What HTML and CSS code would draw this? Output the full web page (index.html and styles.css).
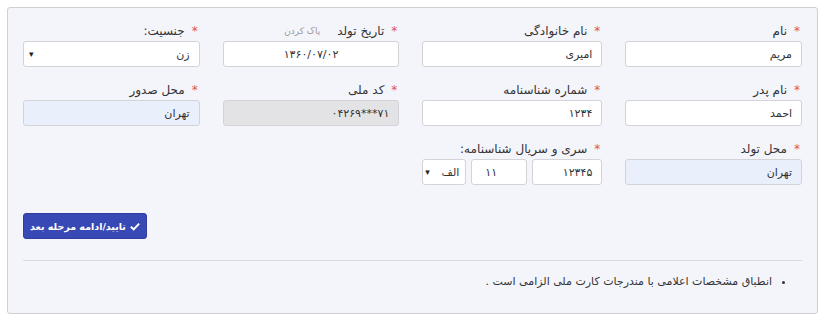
FILE: index.html
```html
<!DOCTYPE html>
<html lang="fa" dir="rtl">
<head>
<meta charset="utf-8">
<title>مشخصات فردی</title>
<link rel="stylesheet" href="styles.css">
</head>
<body>
<div class="panel">
<div class="fields">
  <div class="field">
    <label class="lbl"><span class="req">*</span> نام</label>
    <div class="input">مریم</div>
  </div>
  <div class="field">
    <label class="lbl"><span class="req">*</span> نام خانوادگی</label>
    <div class="input">امیری</div>
  </div>
  <div class="field">
    <label class="lbl"><span class="req">*</span> تاریخ تولد <a class="clear" href="#">پاک کردن</a></label>
    <div class="input center">۱۳۶۰/۰۷/۰۲</div>
  </div>
  <div class="field">
    <label class="lbl"><span class="req">*</span> جنسیت:</label>
    <div class="input select">زن <span class="arrow">&#9662;</span></div>
  </div>

  <div class="field">
    <label class="lbl"><span class="req">*</span> نام پدر</label>
    <div class="input">احمد</div>
  </div>
  <div class="field">
    <label class="lbl"><span class="req">*</span> شماره شناسنامه</label>
    <div class="input">۱۲۳۴</div>
  </div>
  <div class="field">
    <label class="lbl"><span class="req">*</span> کد ملی</label>
    <div class="input grey"><bdi dir="ltr">۰۴۲۶۹***۷۱</bdi></div>
  </div>
  <div class="field">
    <label class="lbl"><span class="req">*</span> محل صدور</label>
    <div class="input blue">تهران</div>
  </div>

  <div class="field">
    <label class="lbl"><span class="req">*</span> محل تولد</label>
    <div class="input blue">تهران</div>
  </div>
  <div class="field">
    <label class="lbl"><span class="req">*</span> سری و سریال شناسنامه:</label>
    <div class="serial">
      <div class="input s-num">۱۲۳۴۵</div>
      <div class="input s-sub">۱۱</div>
      <div class="input select s-let">الف <span class="arrow">&#9662;</span></div>
    </div>
  </div>
</div>

<div class="actions">
  <button class="btn" type="button"><svg class="check" viewBox="0 0 12 10" width="10" height="9"><path d="M1 5.2 L4.4 8.4 L11 1.6" fill="none" stroke="#fff" stroke-width="2.4"/></svg> تایید/ادامه مرحله بعد</button>
</div>

<hr class="sep">

<ul class="notes">
  <li>انطباق مشخصات اعلامی با مندرجات کارت ملی الزامی است .</li>
</ul>
</div>
</body>
</html>
```

FILE: styles.css
```css
/* Personal info form */

html, body
{ margin: 0;
background: #fff;
}

body
{ padding: 7px 7px 0;
font-family: "DejaVu Sans", "Noto Sans", sans-serif;
font-size: 12px;
color: #333;
}

div.panel
{ background-color: #f4f4fb;
border: 1px solid #cfcfd6;
border-radius: 3px;
padding: 15px 15px 0 15px;
height: 307px;
box-sizing: border-box;
}

div.fields
{ display: grid;
grid-template-columns: repeat(4, 1fr);
column-gap: 23px;
row-gap: 15px;
}

label.lbl
{ display: flex;
align-items: center;
gap: 7px;
height: 15px;
margin-bottom: 3px;
padding-right: 2px;
font-size: 12px;
color: #333;
}

span.req
{ color: #e05555;
font-size: 12px;
}

a.clear
{ margin-right: 10px;
font-size: 9px;
color: #999;
text-decoration: none;
}

div.input
{ height: 26px;
box-sizing: border-box;
display: flex;
align-items: center;
padding: 0 9px;
background: #fff;
border: 1px solid #d3d3d8;
border-radius: 3px;
font-size: 11px;
color: #333;
}

div.input.center
{ justify-content: center;
}

div.input.grey
{ background: #e3e3e5;
}

div.input.blue
{ background: #eaf0fb;
}

div.input.select
{ justify-content: space-between;
}

span.arrow
{ font-size: 9px;
color: #222;
margin-left: -4px;
}

div.serial
{ display: flex;
gap: 5px;
}

div.s-num { width: 70px; }
div.s-sub { width: 56px; justify-content: flex-end; padding-left: 13px; }
div.s-let { width: 44px; padding: 0 6px; }

div.actions
{ margin-top: 28px;
display: flex;
justify-content: flex-end;
}

button.btn
{ direction: rtl;
display: flex;
align-items: center;
justify-content: center;
gap: 4px;
white-space: nowrap;
width: 124px;
height: 26px;
padding: 0;
background: #3848b4;
color: #fff;
border: 1px solid #2f3ea0;
border-radius: 3px;
font-family: inherit;
font-size: 9.5px;
font-weight: bold;
}

hr.sep
{ margin: 21px 0 0;
border: 0;
border-top: 1px solid #dadae0;
}

ul.notes
{ margin: 14px 0 0;
padding: 0 30px 0 0;
font-size: 11px;
color: #333;
}
```
